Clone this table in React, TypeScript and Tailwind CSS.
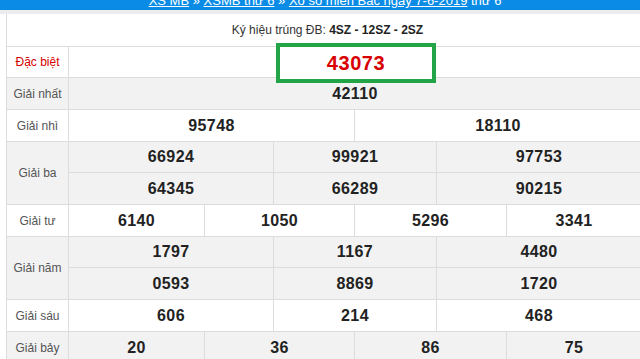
const font = { fontFamily: '"Liberation Sans", Arial, sans-serif' };

type Row = { label: string; cells: string[][]; widths: number[]; gray: boolean };

const W2 = [286, 286];
const W3 = [205, 163, 204];
const W4 = [136, 150, 152, 134];

const rows: Row[] = [
  { label: 'Giải nhất', cells: [['42110']], widths: [572], gray: true },
  { label: 'Giải nhì', cells: [['95748', '18110']], widths: W2, gray: false },
  {
    label: 'Giải ba',
    cells: [
      ['66924', '99921', '97753'],
      ['64345', '66289', '90215'],
    ],
    widths: W3,
    gray: true,
  },
  { label: 'Giải tư', cells: [['6140', '1050', '5296', '3341']], widths: W4, gray: false },
  {
    label: 'Giải năm',
    cells: [
      ['1797', '1167', '4480'],
      ['0593', '8869', '1720'],
    ],
    widths: W3,
    gray: true,
  },
  { label: 'Giải sáu', cells: [['606', '214', '468']], widths: W3, gray: false },
  { label: 'Giải bảy', cells: [['20', '36', '86', '75']], widths: W4, gray: true },
];

function PrizeRow({ row }: { row: Row }) {
  return (
    <div className={`flex border-b border-[#dcdcdc] ${row.gray ? 'bg-[#f2f2f2]' : 'bg-white'}`}>
      {/* label column */}
      <div className="w-[62px] shrink-0 flex items-center justify-center border-r border-[#dcdcdc] text-[12px] text-[#555]">
        {row.label}
      </div>
      <div className="flex flex-col">
        {row.cells.map((line, i) => (
          <div
            key={i}
            className={`flex h-[31px] ${i < row.cells.length - 1 ? 'border-b border-[#dcdcdc]' : ''}`}
          >
            {line.map((num, j) => (
              <div
                key={j}
                style={{ width: row.widths[j] }}
                className={`shrink-0 flex items-center justify-center text-[16px] font-bold tracking-[0.4px] text-[#222] ${
                  j < line.length - 1 ? 'border-r border-[#dcdcdc]' : ''
                }`}
              >
                {num}
              </div>
            ))}
          </div>
        ))}
      </div>
    </div>
  );
}

export default function App() {
  return (
    <div className="w-[640px] h-[359px] overflow-hidden bg-white" style={font}>
      {/* breadcrumb bar, only the bottom edge is visible */}
      <div className="h-[10px] bg-[#0a8ce6] relative overflow-hidden">
        <div className="absolute left-0 right-0 -top-[9px] text-center text-[13px] text-white pl-[10px]">
          <span className="underline">XS MB</span> » <span className="underline">XSMB thứ 6</span> »{' '}
          <span className="underline">Xổ số miền Bắc ngày 7-6-2019</span> thứ 6
        </div>
      </div>
      <div className="h-[4px] bg-[#ececec]" />

      <div className="ml-[6px] w-[640px] border-l border-[#dcdcdc]">
        <div className="h-[33px] flex items-center justify-center border-b border-[#dcdcdc] text-[12px] text-[#333] pl-[2px]">
          Ký hiệu trúng ĐB:&nbsp;<b className="text-[#222]">4SZ - 12SZ - 2SZ</b>
        </div>

        <div className="flex h-[31px] border-b border-[#dcdcdc] bg-white">
          <div className="w-[62px] shrink-0 flex items-center justify-center border-r border-[#dcdcdc] text-[12px] text-[#d40000]">
            Đặc biệt
          </div>
          <div className="relative w-[572px]">
            <div className="absolute left-[207px] -top-[4px] w-[160px] h-[40px] border-[4px] border-[#21a546] bg-white flex items-center justify-center text-[20px] font-bold text-[#d80000] tracking-[0.6px]">
              43073
            </div>
          </div>
        </div>

        {rows.map((r) => (
          <PrizeRow key={r.label} row={r} />
        ))}
      </div>
    </div>
  );
}
